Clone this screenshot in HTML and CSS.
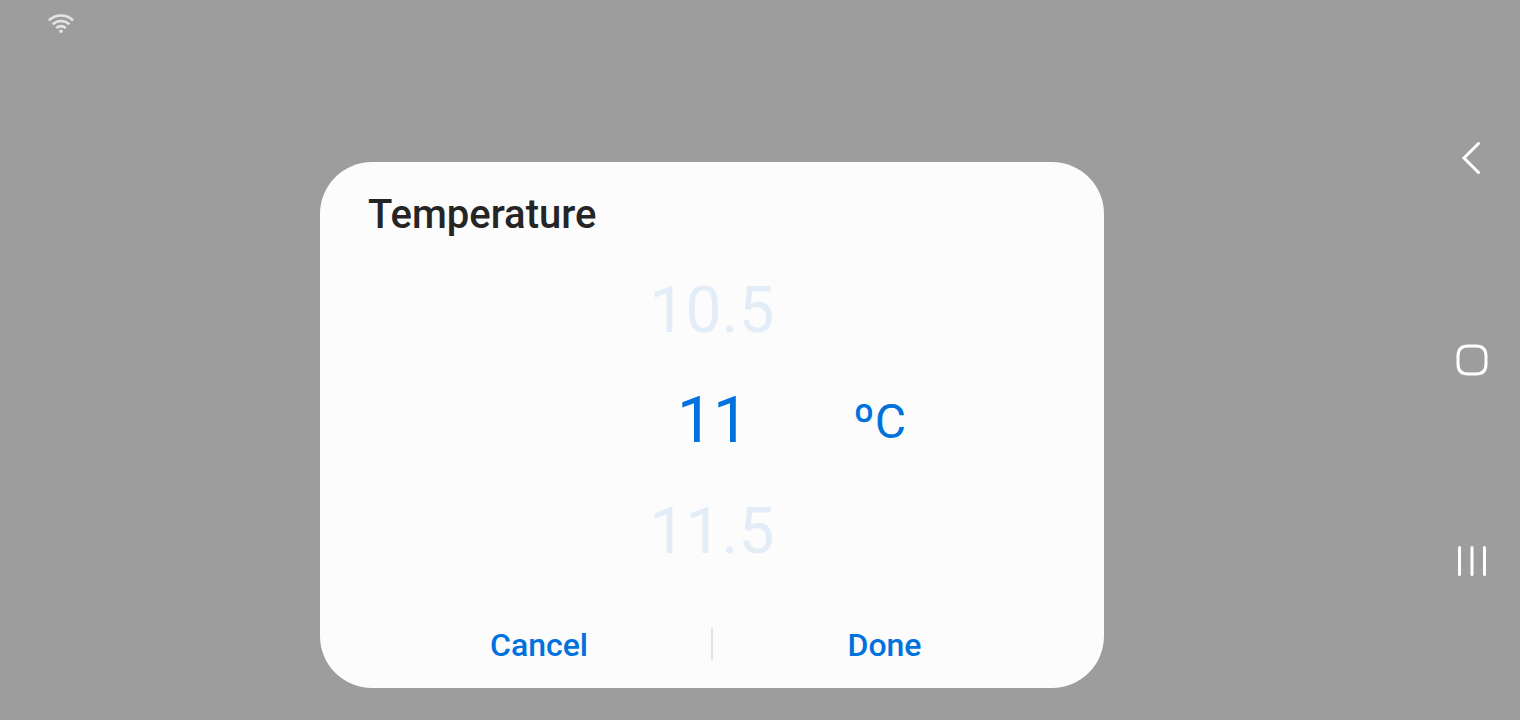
FILE: index.html
```html
<!DOCTYPE html>
<html lang="en">
<head>
<meta charset="utf-8">
<title>Temperature</title>
<link rel="stylesheet" href="styles.css">
</head>
<body>
<div class="screen">
  <header class="status">
    <svg class="wifi" viewBox="0 0 26 20" width="26" height="20"><g fill="none" stroke="#e4e4e4" stroke-width="2.6"><path d="M.9 6.500a17.200 17.200 0 0 1 24.200 0"/><path d="M4.600 10.400a11.900 11.900 0 0 1 16.800 0"/><path d="M8.300 14.100a6.600 6.600 0 0 1 9.400 0"/></g><circle cx="13" cy="17.200" r="1.800" fill="#e4e4e4"/></svg>
  </header>
  <main class="dialog">
    <h1 class="title">Temperature</h1>
    <div class="picker">
      <div class="wheel">
        <span class="value faded">10.5</span>
        <span class="value current">11</span>
        <span class="value faded">11.5</span>
      </div>
      <span class="unit">ºC</span>
    </div>
    <div class="actions">
      <button class="action cancel">Cancel</button>
      <span class="divider"></span>
      <button class="action">Done</button>
    </div>
  </main>
  <nav class="nav">
    <svg width="40" height="40" viewBox="0 0 40 40"><path d="M26.500 5.500 12 20l14.500 14.500" fill="none" stroke="#fff" stroke-width="3" stroke-linecap="round"/></svg>
    <svg width="40" height="40" viewBox="0 0 40 40"><path d="M16 6h8q10 0 10 10v8q0 10-10 10h-8q-10 0-10-10v-8q0-10 10-10Z" fill="none" stroke="#fff" stroke-width="3"/></svg>
    <svg width="40" height="40" viewBox="0 0 40 40"><path d="M7.500 6.500v27M20 6.500v27M32.500 6.500v27" fill="none" stroke="#fff" stroke-width="3" stroke-linecap="round"/></svg>
  </nav>
</div>
</body>
</html>
```
FILE: styles.css
```css
* { box-sizing: border-box; }
body { margin: 0; font-family: Roboto, sans-serif; background: #9d9d9d; }
.screen { display: grid; grid-template-columns: 320px 784px 1fr; height: 720px; }
.status { padding: 14px 0 0 48px; }
.wifi { display: block; }
.dialog { margin-top: 162px; height: 526px; border-radius: 52px; background: #fcfcfc; display: flex; flex-direction: column; overflow: hidden; }
.title { margin: 0; padding: 29px 48px 0; height: 93px; font-size: 40px; line-height: 48px; font-weight: 500; color: #252525; }
.picker { display: grid; grid-template-columns: 272px 240px 1fr; height: 332px; align-items: center; color: #0072de; }
.wheel { grid-column: 2; display: grid; grid-template-rows: 110px 111px 111px; text-align: center; }
.value { line-height: 111px; font-size: 64px; }
.current { padding-left: 2px; }
.faded { color: #e2edf8; }
.unit { padding: 1px 0 0 21px; font-size: 48px; line-height: 56px; }
.actions { display: grid; grid-template-columns: 1fr 2px 1fr; align-items: center; height: 72px; margin-top: 21px; padding: 0 48px; }
.action { border: 0; padding: 2px 0 0; background: none; color: #0072de; font: 500 32px/40px Roboto, sans-serif; }
.cancel { padding-right: 1px; }
.divider { width: 2px; height: 32px; background: #e4e4e4; }
.nav { justify-self: end; width: 96px; display: flex; flex-direction: column; align-items: center; justify-content: space-between; padding: 138px 0 139px; }
```
